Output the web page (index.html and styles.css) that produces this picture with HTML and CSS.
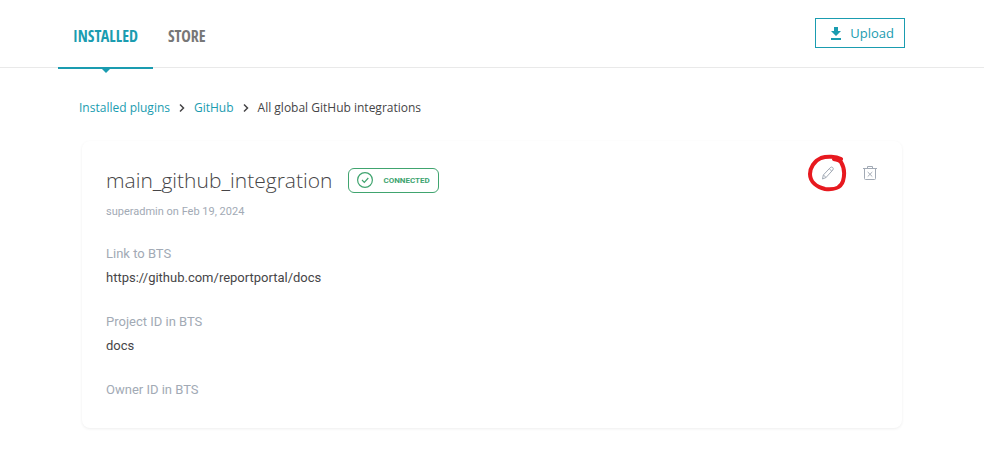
FILE: index.html
```html
<!DOCTYPE html>
<html lang="en">
<head>
<meta charset="utf-8">
<title>All global GitHub integrations</title>
<link rel="stylesheet" href="styles.css">
</head>
<body>
<header class="header">
  <nav class="tabs">
    <a class="tab tab-active" href="#installed">INSTALLED</a>
    <a class="tab" href="#store">STORE</a>
  </nav>
  <button class="upload" type="button">
    <svg width="12" height="14" viewBox="0 0 12 14" fill="currentColor" aria-hidden="true"><path d="M4 1h4v4h3l-5 5-5-5h3zM1 12h10v2H1z"/></svg>
    Upload
  </button>
</header>
<main class="main">
  <nav class="crumbs">
    <a href="#plugins">Installed plugins</a>
    <svg class="chevron" width="6" height="10" viewBox="0 0 6 10" aria-hidden="true"><path d="M1 1.5 4.5 5 1 8.500"/></svg>
    <a href="#github">GitHub</a>
    <svg class="chevron" width="6" height="10" viewBox="0 0 6 10" aria-hidden="true"><path d="M1 1.5 4.5 5 1 8.500"/></svg>
    <span>All global GitHub integrations</span>
  </nav>
  <section class="card">
    <div class="card-head">
      <div class="heading">
        <h1 class="title">main_github_integration</h1>
        <span class="status">
          <svg width="16" height="16" viewBox="0 0 16 16" fill="none" stroke="currentColor" stroke-width="1.2" aria-hidden="true"><circle cx="8" cy="8" r="7.400"/><path d="m5 8 2.300 2.300L11.300 6"/></svg>
          CONNECTED
        </span>
      </div>
      <div class="actions">
        <button class="icon-button" type="button" aria-label="Edit">
          <svg width="14" height="14" viewBox="0 0 14 14" fill="none" stroke="currentColor" stroke-linejoin="round" aria-hidden="true"><path d="m1.500 13 .8-4 6.900-7.300q1.300-1.200 2.500-.2 1.200 1.200.1 2.500L5 11.500zM8.300 2.800l2.600 2.500M2.500 9 5 11.500"/></svg>
          <svg class="marker" width="40" height="38" viewBox="0 0 40 38" aria-hidden="true"><path d="M34 5C29 2.500 20 2 14 4 7 7 3 14 3 20c0 8 7 13 15 15 8 1 16-1 18-8 2-7 1-14-2-19-2-2-4-2-7-3"/></svg>
        </button>
        <button class="icon-button" type="button" aria-label="Delete">
          <svg width="14" height="14" viewBox="0 0 14 14" fill="none" stroke="currentColor" aria-hidden="true"><path d="M0 2.500h14M4.500 2.500v-2h5v2M1.500 2.500v10q0 1 1 1h9q1 0 1-1v-10M4.700 6l4.600 4.600M9.300 6l-4.600 4.600"/></svg>
        </button>
      </div>
    </div>
    <p class="meta">superadmin on Feb 19, 2024</p>
    <dl class="fields">
      <div class="field"><dt>Link to BTS</dt><dd>https://github.com/reportportal/docs</dd></div>
      <div class="field"><dt>Project ID in BTS</dt><dd>docs</dd></div>
      <div class="field"><dt>Owner ID in BTS</dt></div>
    </dl>
  </section>
</main>
</body>
</html>
```
FILE: styles.css
```css
* {
  box-sizing: border-box;
}

body {
  margin: 0;
  background: #fff;
  color: #464547;
  font-family: "Open Sans", sans-serif;
  font-size: 13px;
}

a {
  color: #1a9cb0;
  text-decoration: none;
}

button {
  font-family: inherit;
  cursor: pointer;
}

svg {
  display: block;
  flex: none;
}

.header {
  display: flex;
  justify-content: space-between;
  height: 68px;
  padding: 0 79px 0 58px;
  border-bottom: 1px solid #e9e9e9;
}

.tabs {
  display: flex;
}

.tab {
  position: relative;
  height: 69px;
  padding: 0 15px;
  color: #777;
  font-family: "Open Sans Condensed", "Roboto Condensed", "Liberation Sans Narrow", sans-serif;
  font-size: 16px;
  font-weight: 700;
  line-height: 72px;
}

.tab-active {
  border-bottom: 2px solid #1a9cb0;
  color: #1a9cb0;
}

.tab-active::after {
  content: "";
  position: absolute;
  top: 68px;
  left: 50%;
  margin-left: -4px;
  border: 5px solid transparent;
  border-top-color: #1a9cb0;
  border-bottom: 0;
}

.upload {
  display: flex;
  align-items: center;
  gap: 8px;
  height: 30px;
  margin-top: 18px;
  padding: 0 10px 0 14px;
  border: 1px solid #1a9cb0;
  background: #fff;
  color: #1a9cb0;
  font-size: 13px;
}

.main {
  padding: 30px 82px 26px;
}

.crumbs {
  display: flex;
  align-items: center;
  gap: 9px;
  margin-left: -3px;
  font-size: 12px;
  line-height: 20px;
}

.chevron {
  fill: none;
  stroke: #464547;
  stroke-width: 1.5;
}

.card {
  margin-top: 23px;
  padding: 24px 25px 26px 24px;
  border-radius: 8px;
  background: #fff;
  box-shadow: 0 1px 3px rgba(0, 0, 0, 0.07);
}

.card-head {
  display: flex;
  justify-content: space-between;
}

.heading {
  display: flex;
  align-items: center;
  gap: 16px;
}

.title {
  margin: 0;
  font-size: 21px;
  font-weight: 300;
  line-height: 30px;
}

.status {
  display: flex;
  align-items: center;
  gap: 10px;
  height: 25px;
  padding: 0 8px;
  border: 1px solid #40a46f;
  border-radius: 6px;
  color: #40a46f;
  font-family: Roboto, sans-serif;
  font-size: 8px;
  font-weight: 700;
}

.actions {
  display: flex;
  gap: 28px;
  padding-top: 1px;
}

.icon-button {
  position: relative;
  width: 14px;
  height: 14px;
  padding: 0;
  border: 0;
  background: none;
  color: #a2aab5;
}

.marker {
  position: absolute;
  top: -12px;
  left: -14px;
  fill: none;
  stroke: #e7191f;
  stroke-width: 4;
  stroke-linecap: round;
}

.meta {
  margin: 9px 0 0;
  color: #a2aab5;
  font-family: Roboto, sans-serif;
  font-size: 11px;
  line-height: 16px;
}

.fields {
  display: grid;
  gap: 20px;
  margin: 22px 0 0;
  font-family: Roboto, sans-serif;
  font-size: 13px;
  line-height: 24px;
}

.field dt {
  color: #a2aab5;
}

.field dd {
  margin: 0;
}
```
